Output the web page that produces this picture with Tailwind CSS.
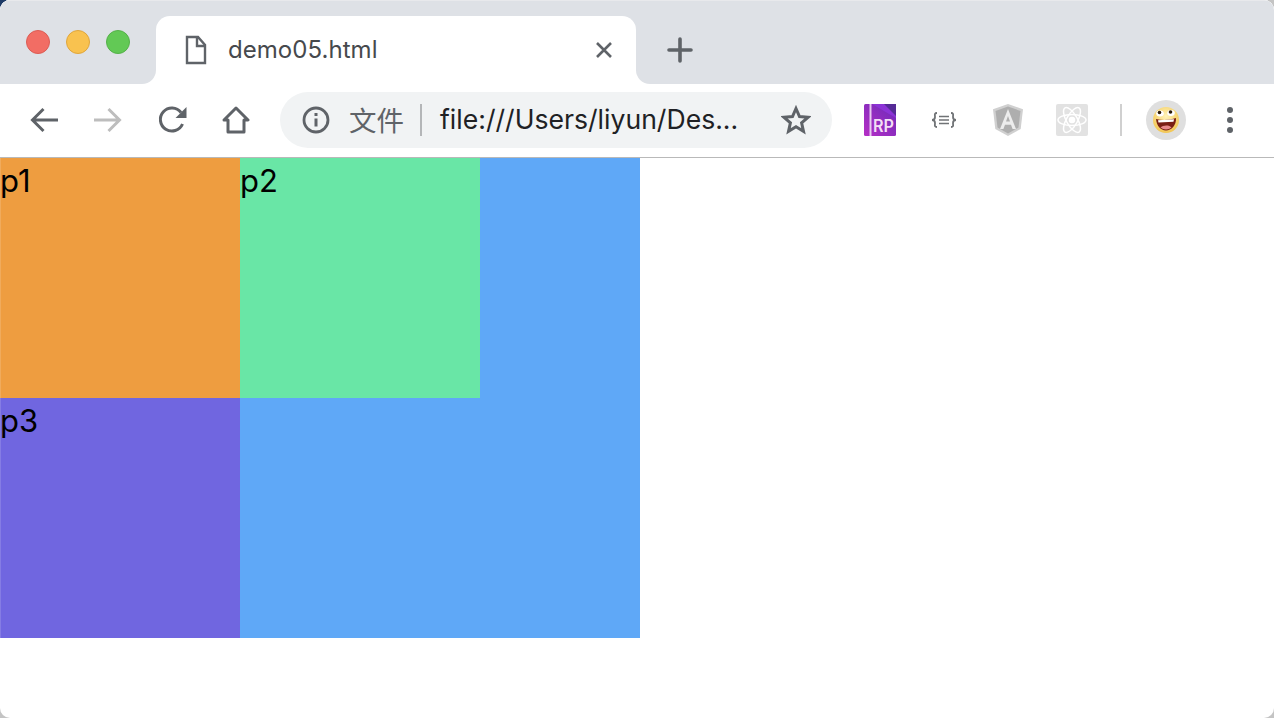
<!DOCTYPE html>
<html><head><meta charset="utf-8"><script src="https://cdn.jsdelivr.net/npm/@tailwindcss/browser@4"></script></head>
<body class="w-[1274px] h-[718px] overflow-hidden font-['Inter',sans-serif] bg-[conic-gradient(#c4c4c4_0_270deg,#1d3a66_270deg_360deg)]">
<div class="w-full h-full bg-white rounded-[10px] overflow-hidden">
<header class="h-[158px] flex flex-col bg-white">
  <div class="h-[84px] flex bg-white">
    <div class="w-[156px] bg-[#dee1e6] rounded-br-[14px] border-t border-[#e8e9ec] flex items-center gap-[16px] pl-[26px] pb-[2px]">
      <span class="w-6 h-6 rounded-full bg-[#f26d64] border border-[#dc5c54]"></span>
      <span class="w-6 h-6 rounded-full bg-[#f9c24f] border border-[#e0a63c]"></span>
      <span class="w-6 h-6 rounded-full bg-[#62c955] border border-[#55b14a]"></span>
    </div>
    <div class="w-[480px] bg-[#dee1e6] pt-[15px] border-t border-[#e8e9ec]">
      <div class="h-[68px] bg-white rounded-t-[14px] flex items-center pl-[28px] pr-[23px]">
        <svg class="w-[24px] h-[30px]" viewBox="0 0 24 30" fill="none" stroke="#5f6368" stroke-width="2.4"><path d="M3 2h11l7 8v18H3z"/><path d="M13 2v9h8"/></svg>
        <span class="ml-[20px] text-[24px] text-[#46494d] tracking-[0.05px]">demo05.html</span>
        <svg class="w-[18px] h-[18px] ml-auto" viewBox="0 0 18 18" stroke="#5f6368" stroke-width="2.6"><path d="M2 2l14 14M16 2L2 16"/></svg>
      </div>
    </div>
    <div class="flex-1 bg-[#dee1e6] rounded-bl-[14px] border-t border-[#e8e9ec] flex items-center pl-[31px] pt-[15px]">
      <svg class="w-[26px] h-[26px]" viewBox="0 0 26 26" stroke="#5f6368" stroke-width="3.6" stroke-linecap="round"><path d="M2 13h22M13 2v22"/></svg>
    </div>
  </div>
  <div class="h-[74px] border-b border-[#b9b9b9] flex items-center pb-[1px]">
    <div class="w-[280px] flex items-center">
      <svg class="ml-[30px] w-[28px] h-[26px]" viewBox="0 0 28 26" fill="none" stroke="#5f6368" stroke-width="3"><path d="M28 13H3M13.500 2L2.500 13l11 11"/></svg>
      <svg class="ml-[36px] w-[28px] h-[26px]" viewBox="0 0 28 26" fill="none" stroke="#bdbdbd" stroke-width="3"><path d="M0 13h25M14.500 2l11 11-11 11"/></svg>
      <svg class="ml-[36px] w-[30px] h-[28px]" viewBox="0 0 30 28" fill="none"><path d="M24.500 18A11.500 11.500 0 1 1 23 6.500" stroke="#5f6368" stroke-width="3"/><path d="M28.500 1v11h-11z" fill="#5f6368"/></svg>
      <svg class="ml-[34px] w-[28px] h-[28px]" viewBox="0 0 28 28" fill="none" stroke="#5f6368" stroke-width="3" stroke-linejoin="round"><path d="M2 14L14 2l12 12h-4v12H6V14z"/></svg>
    </div>
    <div class="w-[552px] h-[56px] rounded-full bg-[#f1f3f4] flex items-center pl-[22px] pr-[21px]">
      <svg class="w-[28px] h-[28px]" viewBox="0 0 28 28" fill="none" stroke="#5f6368"><circle cx="14" cy="14" r="12" stroke-width="2.800"/><path d="M14 12.500v8" stroke-width="3"/><path d="M14 7v3" stroke-width="3"/></svg>
      <span class="ml-[19px] text-[27.500px] text-[#5f6368] font-['Noto_Sans_CJK_SC',sans-serif] leading-none">文件</span>
      <span class="ml-[16px] w-[2px] h-[32px] bg-[#b4b6b8]"></span>
      <span class="ml-[18px] text-[26.600px] text-[#202124] whitespace-nowrap">file:///Users/liyun/Des...</span>
      <svg class="ml-auto w-[30px] h-[30px]" viewBox="0 0 30 30" fill="none" stroke="#5f6368" stroke-width="3"><path d="M15 3.500l3.500 8 8.500.8-6.400 5.600 1.900 8.400L15 21.800l-7.500 4.500 1.900-8.400L3 12.300l8.500-.8z"/></svg>
    </div>
    <div class="flex items-center flex-1">
      <svg class="ml-[32px] w-[32px] h-[32px]" viewBox="0 0 32 32"><defs><linearGradient id="rp" x1="0" y1="1" x2="1" y2="0"><stop offset="0" stop-color="#b62fc6"/><stop offset="1" stop-color="#6a2bb8"/></linearGradient></defs><rect width="32" height="32" rx="1.500" fill="url(#rp)"/><path d="M8 0h24v14z" fill="#8c33d6"/><path d="M20 0h12v12z" fill="#552a96"/><rect x="5.500" width="2" height="32" fill="#e8c8f0"/><text x="9" y="28" font-size="17" fill="#f3dff5" font-family="Inter" font-weight="600" textLength="21" lengthAdjust="spacingAndGlyphs">RP</text></svg>
      <svg class="ml-[35px] w-[26px] h-[16px]" viewBox="0 0 26 16" fill="none" stroke="#707376" stroke-width="1.800"><path d="M6 1C3 1 4 3 4 5c0 2-1 3-3 3 2 0 3 1 3 3 0 2-1 4 2 4M20 1c3 0 2 2 2 4 0 2 1 3 3 3-2 0-3 1-3 3 0 2 1 4-2 4"/><path d="M8 4.500h10M8 8h10M8 11.500h10" stroke-width="1.400"/></svg>
      <svg class="ml-[36px] w-[30px] h-[32px]" viewBox="0 0 30 32"><path d="M15 0L0 5.300l2.300 19.600L15 32l12.700-7.100L30 5.300z" fill="#d0d0d0"/><path d="M15 2.500L2.500 7l2 16.500L15 29.500l10.500-6 2-16.500z" fill="#aeaeae"/><path d="M15 5L7 25h3.400l1.600-4.200h6l1.600 4.200H23zM13 17.500l2-5.500 2 5.500z" fill="#ececec"/></svg>
      <svg class="ml-[33px] w-[32px] h-[32px]" viewBox="0 0 32 32" fill="none" stroke="#fff" stroke-width="1.500"><rect width="32" height="32" rx="2" fill="#e2e2e2" stroke="none"/><ellipse cx="16" cy="16" rx="14" ry="5.500"/><ellipse cx="16" cy="16" rx="14" ry="5.500" transform="rotate(60 16 16)"/><ellipse cx="16" cy="16" rx="14" ry="5.500" transform="rotate(120 16 16)"/><circle cx="16" cy="16" r="2.500" fill="#fff"/></svg>
      <span class="ml-[32px] w-[2px] h-[32px] bg-[#d0d0d0]"></span>
      <div class="ml-[24px] w-[40px] h-[40px] rounded-full bg-[#dfdfdf] flex items-center justify-center">
        <svg class="w-[26px] h-[26px]" viewBox="0 0 26 26"><defs><radialGradient id="fc" cx="0.500" cy="0.350" r="0.700"><stop offset="0" stop-color="#fff3b8"/><stop offset="1" stop-color="#f1c24a"/></radialGradient></defs><circle cx="13" cy="13" r="13" fill="url(#fc)"/><ellipse cx="7" cy="6.500" rx="3.800" ry="3" fill="#fff"/><ellipse cx="18" cy="6" rx="3.800" ry="3" fill="#fff"/><circle cx="6.500" cy="5.500" r="1.800" fill="#2b1a08"/><circle cx="17.500" cy="5" r="1.800" fill="#2b1a08"/><path d="M3 12c6 1.500 14 1.200 20-1 .5 7-4.500 12.500-10 12.500S3.500 18.500 3 12z" fill="#7a1f14"/><path d="M5 13.200l16-1-.5 2.500-15 .8z" fill="#fff"/><path d="M7.500 20.500c2-2.500 9-3 11 0-3 2.500-8 2.500-11 0z" fill="#e88a8a"/></svg>
      </div>
      <div class="ml-[41px] flex flex-col gap-[4px]"><span class="w-[6px] h-[6px] rounded-full bg-[#5f6368]"></span><span class="w-[6px] h-[6px] rounded-full bg-[#5f6368]"></span><span class="w-[6px] h-[6px] rounded-full bg-[#5f6368]"></span></div>
    </div>
  </div>
</header>
<main class="w-[640px] h-[480px] bg-[#5fa8f7] grid grid-cols-[240px_240px] grid-rows-[240px_240px] text-[31px] leading-[46px] text-black">
  <div class="bg-[#ee9d40] shadow-[inset_1px_0_0_rgba(255,255,255,0.15)]">p1</div>
  <div class="bg-[#69e6a6]">p2</div>
  <div class="bg-[#7066e0] shadow-[inset_1px_0_0_rgba(255,255,255,0.15)]">p3</div>
</main>
</div>
</body></html>
